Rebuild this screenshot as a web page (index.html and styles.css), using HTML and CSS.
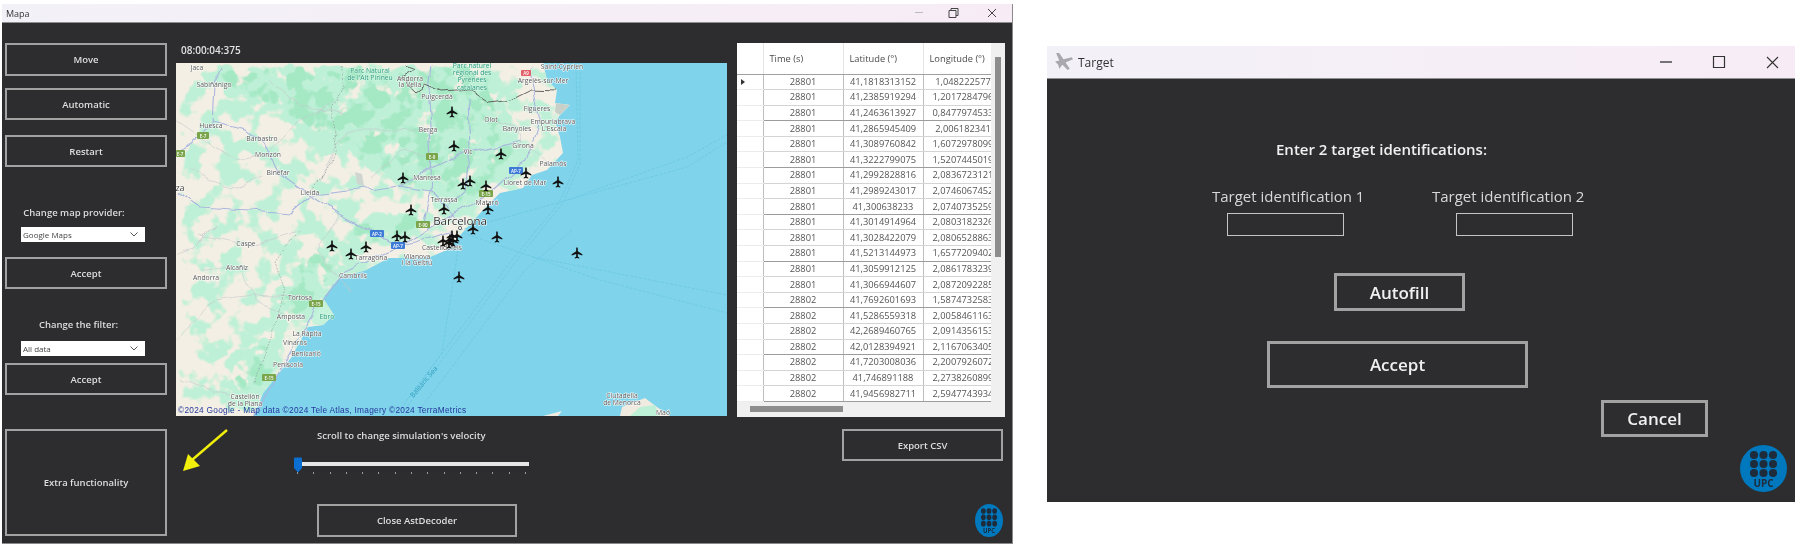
FILE: index.html
```html
<!DOCTYPE html>
<html lang="en">
<head>
	<meta charset="UTF-8">
	<title>AstDecoder</title>
	<link rel="stylesheet" href="styles.css">
</head>
<body>
<div class="desktop">

<!-- Map window -->
<div class="win win_map">
	<div class="titlebar">
		<span class="title">Mapa</span>
		<svg class="ctrls" width="90" height="14" viewBox="0 0 90 14">
			<path d="M7 6.5h8" stroke="#bbb" fill="none"/>
			<path d="M41 4.5h7v7h-7zM43 4.5v-2h7v7h-2" stroke="#444" fill="none"/>
			<path d="M80 3l8 8M88 3l-8 8" stroke="#444" fill="none"/>
		</svg>
	</div>
	<div class="map_body">
		<div class="side">
			<button class="btn b_move">Move</button>
			<button class="btn b_auto">Automatic</button>
			<button class="btn b_restart">Restart</button>
			<div class="lbl l_provider">Change map provider:</div>
			<div class="combo">Google Maps<svg width="8" height="5" viewBox="0 0 8 5"><path d="M.5.5L4 4 7.5.5" stroke="#555" fill="none"/></svg></div>
			<button class="btn b_accept1">Accept</button>
			<div class="lbl l_filter">Change the filter:</div>
			<div class="combo">All data<svg width="8" height="5" viewBox="0 0 8 5"><path d="M.5.5L4 4 7.5.5" stroke="#555" fill="none"/></svg></div>
			<button class="btn b_accept2">Accept</button>
			<button class="btn b_extra">Extra functionality</button>
		</div>

		<div class="center">
			<div class="clock">08:00:04:375</div>
			<svg class="map" width="551" height="353" viewBox="176 63 551 353">
				<defs>
					<path id="land" d="M176 63H543L547 80 557 90 555 103 570 105 560 115 555 122 560 137 563 153 547 170 532 175 523 188 500 193 483 210 463 232 447 250 430 257 400 258 389 258 366 270 339 278 323 298 334 315 323 325 308 327 298 345 291 358 276 377 263 393 254 416H176Z"/>
					<clipPath id="land_clip"><use href="#land"/></clipPath>
					<filter id="g_low" filterUnits="userSpaceOnUse" x="176" y="63" width="551" height="353" color-interpolation-filters="sRGB">
						<feTurbulence type="fractalNoise" baseFrequency=".05" numOctaves="3" seed="7" result="n"/>
						<feColorMatrix in="n" type="matrix" values="0 0 0 0 0 0 0 0 0 0 0 0 0 0 0 1 0 0 0 0" result="a"/>
						<feGaussianBlur in="SourceGraphic" stdDeviation="6" result="s"/>
						<feComposite in="a" in2="s" operator="in" result="m"/>
						<feComponentTransfer in="m" result="t"><feFuncA type="linear" slope="10" intercept="-3.74"/></feComponentTransfer>
						<feFlood flood-color="#bdf0d6"/>
						<feComposite in2="t" operator="in"/>
					</filter>
					<filter id="g_high" filterUnits="userSpaceOnUse" x="176" y="63" width="551" height="353" color-interpolation-filters="sRGB">
						<feTurbulence type="fractalNoise" baseFrequency=".06" numOctaves="3" seed="21" result="n"/>
						<feColorMatrix in="n" type="matrix" values="0 0 0 0 0 0 0 0 0 0 0 0 0 0 0 1 0 0 0 0" result="a"/>
						<feGaussianBlur in="SourceGraphic" stdDeviation="6" result="s"/>
						<feComposite in="a" in2="s" operator="in" result="m"/>
						<feComponentTransfer in="m" result="t"><feFuncA type="linear" slope="10" intercept="-3.5"/></feComponentTransfer>
						<feFlood flood-color="#bdf0d6"/>
						<feComposite in2="t" operator="in"/>
					</filter>
					<filter id="g_dark" filterUnits="userSpaceOnUse" x="176" y="63" width="551" height="353" color-interpolation-filters="sRGB">
						<feTurbulence type="fractalNoise" baseFrequency=".055" numOctaves="3" seed="42" result="n"/>
						<feColorMatrix in="n" type="matrix" values="0 0 0 0 0 0 0 0 0 0 0 0 0 0 0 1 0 0 0 0" result="a"/>
						<feGaussianBlur in="SourceGraphic" stdDeviation="6" result="s"/>
						<feComposite in="a" in2="s" operator="in" result="m"/>
						<feComponentTransfer in="m" result="t"><feFuncA type="linear" slope="10" intercept="-4.7"/></feComponentTransfer>
						<feFlood flood-color="#a4e8c4"/>
						<feComposite in2="t" operator="in"/>
					</filter>
					<filter id="wiggle" filterUnits="userSpaceOnUse" x="176" y="63" width="551" height="353">
						<feTurbulence type="fractalNoise" baseFrequency=".05" numOctaves="2" seed="3" result="n"/>
						<feDisplacementMap in="SourceGraphic" in2="n" scale="9" xChannelSelector="R" yChannelSelector="G"/>
					</filter>
					<g id="p" transform="scale(.82)"><path d="M0-7c.7 0 1 .9 1 1.8V-2L6.5 1.6V3L1 1.2V4.4L2.8 5.8V6.8L0 6-2.8 6.8V5.8L-1 4.4V1.2L-6.5 3V1.6L-1-2V-5.2C-1-6.1-.7-7 0-7Z"/></g>
				</defs>
				<rect x="176" y="63" width="551" height="353" fill="#7fd3ea"/>
				<!-- land -->
				<use href="#land" fill="#f4efe4"/>
				<path fill="#f0ebe0" d="M620 416L622 407 645 398 657 407 670 416ZM543 416L562 411 558 416Z"/>
				<g clip-path="url(#land_clip)">
					<rect x="176" y="63" width="551" height="353" fill="#000" fill-opacity=".8" filter="url(#g_low)"/>
					<path filter="url(#g_high)" d="M195 63H500L512 90 500 110 525 118 520 150 545 160 525 178 495 190 470 205 445 222 425 225 430 190 400 192 370 178 345 155 320 160 300 140 275 115 240 105 205 88ZM350 225L380 205 420 200 432 225 400 245 370 255 340 262 325 252ZM300 255L345 235 355 270 330 295 320 325 300 330 285 345 270 330 265 300ZM230 350L265 335 290 350 280 375 262 395 250 416H225L215 385Z"/>
					<path filter="url(#g_dark)" d="M200 63H490L500 110 520 150 500 185 450 215 430 190 400 190 370 175 340 150 300 135 270 105 230 95ZM340 225L420 205 430 225 370 255ZM290 260L345 240 330 295 300 325 270 320ZM235 350L275 335 280 370 255 400 225 395Z"/>
					<path fill="#c9cfc9" d="M556 103L570 105 560 115 555 112Z"/>
					<path fill="#cfd5cf" d="M355 172L362 174 364 186 357 184Z"/>
					<path fill="#c4f2da" d="M323 300L334 315 323 325 312 322Z"/>
				</g>
				<path fill="#bdf0d6" d="M640 407L655 405 660 416H630Z"/>
				<!-- roads -->
				<g filter="url(#wiggle)">
					<g fill="none" stroke="#a9b6de" stroke-width="1.1" stroke-linejoin="round">
						<path d="M176 192L200 208 250 211 290 214 312 195 360 190 400 185 430 190 445 205 460 222"/>
						<path d="M222 66L214 84 212 125 176 155"/>
						<path d="M212 122L245 130 262 140 278 172 310 195"/>
						<path d="M312 197L340 215 377 235 400 246 440 235 452 232"/>
						<path d="M254 416L290 352 318 305 345 272 397 248 440 222 487 196 516 170 530 150 540 120 530 72 535 66"/>
						<path d="M432 66L428 100 432 157 430 190 423 224"/>
						<path d="M468 100L470 150 465 190 446 205"/>
						<path d="M522 140L470 152M400 185L440 165 470 150"/>
					</g>
					<g fill="none" stroke="#c5c8cc" stroke-width=".6">
						<path d="M176 120L235 160 268 154 300 120 340 100M200 235L250 245 300 230M176 340L215 300 250 295 300 297M200 270L240 268 255 300 290 316M180 380L230 396M320 180L345 130 380 130 428 129M370 178L400 150 432 157M492 120L517 128 523 145 553 163M270 80L300 105 345 115M190 170L230 190 262 175M215 225L190 250 176 255M350 290L315 250 340 215"/>
					</g>
					<g fill="none" stroke="#8f9a96" stroke-width=".7" stroke-dasharray="1.5 1.5">
						<path d="M310 195L338 150 330 110 345 85 340 66M295 235L275 262 285 290 270 340 254 385"/>
					</g>
					<path fill="none" stroke="#555" stroke-width=".9" d="M404 66L414 70 400 78 415 92 425 85 442 92 470 90 490 103 510 100 530 90 555 91"/>
				</g>
				<!-- sea routes -->
				<g fill="none" stroke="#63c4e0" stroke-width=".6" stroke-dasharray="3 1.5">
					<path d="M580 63V163L563 203 517 260 407 407"/>
					<path d="M576 63L578 160 559 203 512 260 402 407"/>
					<path d="M572 230L525 270 418 412"/>
					<path d="M460 230L687 167 727 142"/>
					<path d="M567 200L687 157 727 135"/>
					<path d="M463 233L600 280 727 313"/>
					<path d="M533 257L727 295"/>
					<path d="M458 250L442 353 407 400"/>
				</g>
				<!-- road shields -->
				<g class="shield">
					<rect class="sg" x="197" y="132" width="12" height="7"/><text x="203" y="138">E-7</text>
					<rect class="sg" x="176" y="150" width="9" height="7"/><text x="180" y="156">E-7</text>
					<rect class="sg" x="426" y="153" width="12" height="7"/><text x="432" y="159">E-9</text>
					<rect class="sg" x="479" y="190" width="14" height="7"/><text x="486" y="196">E-15</text>
					<rect class="sg" x="416" y="221" width="14" height="7"/><text x="423" y="227">E-90</text>
					<rect class="sg" x="309" y="300" width="14" height="7"/><text x="316" y="306">E-15</text>
					<rect class="sg" x="262" y="374" width="14" height="7"/><text x="269" y="380">E-15</text>
					<rect class="sb" x="370" y="230" width="14" height="7"/><text x="377" y="236">AP-2</text>
					<rect class="sb" x="391" y="242" width="14" height="7"/><text x="398" y="248">AP-7</text>
					<rect class="sb" x="509" y="167" width="14" height="7"/><text x="516" y="173">AP-7</text>
					<rect class="sr" x="521" y="70" width="10" height="6"/><text x="526" y="75">A9</text>
				</g>
				<!-- place names -->
				<g class="place">
					<text x="197" y="70">Jaca</text><text x="214" y="87">Sabiñánigo</text><text x="211" y="128">Huesca</text>
					<text x="262" y="141">Barbastro</text><text x="268" y="157">Monzón</text><text x="278" y="175">Binéfar</text>
					<text x="310" y="195">Lleida</text><text class="big" x="180" y="191">za</text>
					<text x="410" y="81">Andorra</text><text x="410" y="87">la Vella</text><text x="437" y="99">Puigcerdà</text>
					<text x="428" y="132">Berga</text><text x="427" y="180">Manresa</text><text x="444" y="202">Terrassa</text>
					<text x="487" y="205">Mataró</text><text x="525" y="185">Lloret de Mar</text><text x="553" y="166">Palamós</text>
					<text x="523" y="148">Girona</text><text x="517" y="131">Banyoles</text><text x="554" y="131">L'Escala</text>
					<text x="553" y="124">Empuriabrava</text><text x="537" y="111">Figueres</text><text x="491" y="122">Olot</text>
					<text x="468" y="154">Vic</text><text x="562" y="69">Saint-Cyprien</text><text x="543" y="83">Argelès-sur-Mer</text>
					<text x="442" y="250">Castelldefels</text><text x="417" y="259">Vilanova</text><text x="417" y="265">i la Geltrú</text>
					<text x="371" y="260">Tarragona</text><text x="353" y="278">Cambrils</text><text x="246" y="246">Caspe</text>
					<text x="237" y="270">Alcañiz</text><text x="206" y="280">Andorra</text><text x="300" y="300">Tortosa</text>
					<text x="291" y="319">Amposta</text><text x="307" y="336">La Ràpita</text><text x="295" y="345">Vinaròs</text>
					<text x="306" y="356">Benicarló</text><text x="288" y="367">Peníscola</text><text x="245" y="399">Castellón</text>
					<text x="245" y="406">de la Plana</text><text x="622" y="398">Ciutadella</text><text x="622" y="405">de Menorca</text>
					<text x="663" y="415">Maó</text>
					<text class="big2" x="460" y="225">Barcelona</text>
					<text class="park" x="370" y="73">Parc Natural</text><text class="park" x="370" y="80">de l'Alt Pirineu</text>
					<text class="park" x="472" y="68">Parc naturel</text><text class="park" x="472" y="75">régional des</text>
					<text class="park" x="472" y="82">Pyrénées</text><text class="park" x="472" y="90">catalanes</text>
					<text class="park" x="327" y="319">Ebro</text>
					<text class="sea" x="424" y="384" transform="rotate(-50 424 382)">Balearic Sea</text>
				</g>
				<circle cx="460" cy="228" r="1.6" fill="#fff" stroke="#333" stroke-width=".7"/>
				<!-- aircraft -->
				<g fill="#111">
					<use href="#p" x="452" y="112"/><use href="#p" x="454" y="146"/><use href="#p" x="501" y="154"/>
					<use href="#p" x="526" y="173"/><use href="#p" x="558" y="182"/><use href="#p" x="403" y="178"/>
					<use href="#p" x="463" y="184"/><use href="#p" x="470" y="181"/><use href="#p" x="486" y="186"/>
					<use href="#p" x="444" y="209"/><use href="#p" x="411" y="210"/><use href="#p" x="488" y="209"/>
					<use href="#p" x="473" y="229"/><use href="#p" x="497" y="237"/><use href="#p" x="405" y="237"/>
					<use href="#p" x="397" y="236"/><use href="#p" x="443" y="241"/><use href="#p" x="450" y="240"/>
					<use href="#p" x="452" y="236"/><use href="#p" x="449" y="243"/><use href="#p" x="453" y="241"/>
					<use href="#p" x="457" y="236"/><use href="#p" x="577" y="253"/><use href="#p" x="459" y="277"/>
					<use href="#p" x="332" y="246"/><use href="#p" x="366" y="247"/><use href="#p" x="351" y="254"/>
				</g>
				<text class="credit" x="178" y="413">©2024 Google - Map data ©2024 Tele Atlas, Imagery ©2024 TerraMetrics</text>
			</svg>
			<div class="below">
				<svg class="arrow" width="50" height="48" viewBox="0 0 50 48">
					<path d="M49 3L14 33" stroke="#f2ef0a" stroke-width="2.4"/>
					<path d="M5 44L10 27 22 39Z" fill="#f2ef0a"/>
				</svg>
				<div class="speed">
					<div class="lbl speed_lbl">Scroll to change simulation's velocity</div>
					<div class="slider">
						<svg class="thumb" width="10" height="16" viewBox="0 0 10 16"><path d="M1 1.5Q1 .5 2 .5H8Q9 .5 9 1.5V11L5 15.5 1 11Z" fill="#0a6fd0"/></svg>
						<div class="track"></div>
						<div class="ticks"><i></i><i></i><i></i><i></i><i></i><i></i><i></i><i></i><i></i><i></i><i></i><i></i><i></i><i></i><i></i></div>
					</div>
					<button class="btn b_close">Close AstDecoder</button>
				</div>
			</div>
		</div>

		<div class="right">
			<div class="grid_box">
				<div class="grid_view">
					<table class="grid">
						<thead><tr><th class="rh"></th><th>Time (s)</th><th>Latitude (°)</th><th>Longitude (°)</th></tr></thead>
						<tbody>
							<tr><td class="rh"><span class="cur"></span></td><td>28801</td><td>41,1818313152</td><td>1,048222577</td></tr>
							<tr><td class="rh"></td><td>28801</td><td>41,2385919294</td><td>1,2017284796</td></tr>
							<tr><td class="rh"></td><td>28801</td><td>41,2463613927</td><td>0,8477974533</td></tr>
							<tr><td class="rh"></td><td>28801</td><td>41,2865945409</td><td>2,006182341</td></tr>
							<tr><td class="rh"></td><td>28801</td><td>41,3089760842</td><td>1,6072978099</td></tr>
							<tr><td class="rh"></td><td>28801</td><td>41,3222799075</td><td>1,5207445019</td></tr>
							<tr><td class="rh"></td><td>28801</td><td>41,2992828816</td><td>2,0836723121</td></tr>
							<tr><td class="rh"></td><td>28801</td><td>41,2989243017</td><td>2,0746067452</td></tr>
							<tr><td class="rh"></td><td>28801</td><td>41,300638233</td><td>2,0740735259</td></tr>
							<tr><td class="rh"></td><td>28801</td><td>41,3014914964</td><td>2,0803182326</td></tr>
							<tr><td class="rh"></td><td>28801</td><td>41,3028422079</td><td>2,0806528863</td></tr>
							<tr><td class="rh"></td><td>28801</td><td>41,5213144973</td><td>1,6577209402</td></tr>
							<tr><td class="rh"></td><td>28801</td><td>41,3059912125</td><td>2,0861783239</td></tr>
							<tr><td class="rh"></td><td>28801</td><td>41,3066944607</td><td>2,0872092285</td></tr>
							<tr><td class="rh"></td><td>28802</td><td>41,7692601693</td><td>1,5874732583</td></tr>
							<tr><td class="rh"></td><td>28802</td><td>41,5286559318</td><td>2,0058461163</td></tr>
							<tr><td class="rh"></td><td>28802</td><td>42,2689460765</td><td>2,0914356153</td></tr>
							<tr><td class="rh"></td><td>28802</td><td>42,0128394921</td><td>2,1167063405</td></tr>
							<tr><td class="rh"></td><td>28802</td><td>41,7203008036</td><td>2,2007926072</td></tr>
							<tr><td class="rh"></td><td>28802</td><td>41,746891188</td><td>2,2738260899</td></tr>
							<tr><td class="rh"></td><td>28802</td><td>41,9456982711</td><td>2,5947743934</td></tr>
						</tbody>
					</table>
				</div>
				<div class="vscroll"><span></span></div>
				<div class="hscroll"><span></span></div>
			</div>
			<button class="btn b_export">Export CSV</button>
			<svg class="upc upc_small" width="28" height="33" viewBox="0 0 47 47" preserveAspectRatio="none">
				<ellipse cx="23.5" cy="23.5" rx="23.5" ry="23.5" fill="#0078bd"/>
				<g fill="#1d2b3a"><circle cx="14" cy="10" r="4"/><circle cx="23.5" cy="10" r="4"/><circle cx="33" cy="10" r="4"/><circle cx="14" cy="19" r="4"/><circle cx="23.5" cy="19" r="4"/><circle cx="33" cy="19" r="4"/><circle cx="14" cy="28" r="4"/><circle cx="23.5" cy="28" r="4"/><circle cx="33" cy="28" r="4"/></g>
				<text x="23.5" y="42" class="upc_txt">UPC</text>
			</svg>
		</div>
	</div>
</div>

<!-- Target dialog -->
<div class="win win_target">
	<div class="titlebar">
		<svg class="app_icon" width="20" height="20" viewBox="0 0 19 19"><path d="M2 1L5 1 9 7 17 5 18 7 11 10 15 16 13 17 8 12 5 16 4 12 1 9 5 8Z" fill="#a9a9ad"/></svg>
		<span class="title">Target</span>
		<svg class="ctrls" width="130" height="16" viewBox="0 0 130 16">
			<path d="M5 8h12" stroke="#222" stroke-width="1.2" fill="none"/>
			<path d="M58.5 2.5h11v11h-11z" stroke="#333" stroke-width="1.2" fill="none"/>
			<path d="M112 3l11 11M123 3l-11 11" stroke="#333" stroke-width="1.1" fill="none"/>
		</svg>
	</div>
	<div class="target_body">
		<div class="heading">Enter 2 target identifications:</div>
		<div class="fields">
			<div class="field"><label>Target identification 1</label><div class="input input_a"></div></div>
			<div class="field"><label>Target identification 2</label><div class="input input_b"></div></div>
		</div>
		<button class="btn big b_autofill">Autofill</button>
		<button class="btn big b_accept">Accept</button>
		<button class="btn big b_cancel">Cancel</button>
		<svg class="upc upc_big" width="47" height="47" viewBox="0 0 47 47">
			<ellipse cx="23.5" cy="23.5" rx="23.5" ry="23.5" fill="#0078bd"/>
			<g fill="#1d2b3a"><circle cx="14" cy="10" r="4"/><circle cx="23.5" cy="10" r="4"/><circle cx="33" cy="10" r="4"/><circle cx="14" cy="19" r="4"/><circle cx="23.5" cy="19" r="4"/><circle cx="33" cy="19" r="4"/><circle cx="14" cy="28" r="4"/><circle cx="23.5" cy="28" r="4"/><circle cx="33" cy="28" r="4"/></g>
			<text x="23.5" y="42" class="upc_txt">UPC</text>
		</svg>
	</div>
</div>

</div>
</body>
</html>
```

FILE: styles.css
```css
html, body {
	margin: 0;
	height: 100%;
	background: #fff;
	overflow: hidden;
}
body {
	font-family: "Open Sans", "Noto Sans", sans-serif;
}
.desktop {
	display: flex;
	align-items: flex-start;
}

/* windows */
.win {
	background: #2d2d2f;
	filter: blur(.35px);
}
.win_map {
	width: 1010px;
	height: 539px;
	margin: 4px 0 0 2px;
	border-right: 1px solid #8a8a8a;
	border-bottom: 1px solid #8a8a8a;
}
.win_target {
	width: 748px;
	height: 456px;
	margin: 46px 0 0 34px;
}
.titlebar {
	display: flex;
	align-items: center;
	background: linear-gradient(90deg, #f3f1f8, #f7ecf6);
	border-bottom: 1px solid #8f8f8f;
	color: #333;
}
.win_map .titlebar {
	height: 18px;
	padding: 0 8px 0 4px;
	font-size: 9px;
}
.win_target .titlebar {
	height: 32px;
	padding: 0 10px 0 7px;
	font-size: 12px;
}
.app_icon {
	margin-right: 4px;
}
.ctrls {
	margin-left: auto;
}
.win_map .ctrls {
	margin-right: 6px;
}

/* buttons */
.btn {
	display: block;
	box-sizing: border-box;
	padding: 0;
	background: transparent;
	border: 2px solid #a2a2a2;
	color: #dedede;
	font-family: inherit;
	font-size: 9.5px;
	font-weight: 600;
}
.btn.big {
	border-width: 3px;
	color: #f0f0f0;
	font-size: 17px;
}

/* map window layout */
.map_body {
	display: flex;
	height: 520px;
	box-sizing: border-box;
	padding: 20px 0 0 3px;
}
.side {
	width: 162px;
	flex: none;
	display: flex;
	flex-direction: column;
}
.side .btn {
	width: 162px;
}
.b_move { height: 33px; }
.b_auto { height: 32px; margin-top: 12px; }
.b_restart { height: 32px; margin-top: 15px; }
.b_accept1 { height: 32px; margin-top: 15px; }
.b_accept2 { height: 32px; margin-top: 7px; }
.b_extra { height: 107px; margin-top: 34px; }
.lbl {
	color: #dcdcdc;
	font-size: 9.5px;
	line-height: 14px;
	font-weight: 600;
}
.l_provider {
	margin-top: 39px;
	text-align: center;
	padding-right: 24px;
	height: 14px;
	margin-bottom: 7px;
}
.l_filter {
	margin-top: 29px;
	text-align: center;
	padding-right: 15px;
	height: 14px;
	margin-bottom: 9px;
}
.combo {
	display: flex;
	align-items: center;
	justify-content: space-between;
	box-sizing: border-box;
	width: 124px;
	height: 15px;
	margin-left: 16px;
	padding: 0 7px 0 2px;
	background: #fff;
	color: #444;
	font-size: 8px;
}
.center {
	width: 551px;
	flex: none;
	margin-left: 9px;
}
.clock {
	height: 20px;
	padding: 0 0 0 5px;
	color: #e2e2e2;
	font-size: 10px;
	font-weight: 600;
	line-height: 15px;
}
.map {
	display: block;
}
.map text {
	text-anchor: middle;
}
.place text {
	font-size: 6.8px;
	fill: #555;
	stroke: #fff;
	stroke-width: 1px;
	paint-order: stroke;
	stroke-linejoin: round;
}
.place .big {
	font-size: 9px;
	fill: #444;
}
.place .big2 {
	font-size: 11.5px;
	fill: #333;
}
.place .park {
	fill: #2f9b80;
	stroke: #d8f7e6;
	stroke-width: .8px;
}
.place .sea {
	fill: #2f9fbf;
	stroke: none;
}
.shield rect { rx: 1px; }
.shield .sg { fill: #7aa54a; }
.shield .sb { fill: #3d7bd6; }
.shield .sr { fill: #e2606a; }
.shield text {
	font-size: 4.5px;
	fill: #fff;
	font-weight: 600;
}
.map .credit {
	text-anchor: start;
	font-size: 8.3px;
	letter-spacing: .28px;
	fill: #23389c;
	font-family: "Liberation Sans", sans-serif;
}
.below {
	display: flex;
}
.arrow {
	flex: none;
	margin: 11px 0 0 2px;
}
.speed {
	margin-left: 89px;
	width: 200px;
	padding-top: 13px;
}
.speed_lbl {
	white-space: nowrap;
}
.slider {
	position: relative;
	width: 236px;
	margin: 13px 0 0 -24px;
	padding-top: 6px;
}
.thumb {
	position: absolute;
	left: 0;
	top: 1px;
}
.track {
	height: 4px;
	margin-left: 3px;
	background: #e6e6e6;
}
.ticks {
	display: flex;
	justify-content: space-between;
	margin: 6px 3px 0 4px;
}
.ticks i {
	width: 1px;
	height: 2px;
	background: #9a9a9a;
}
.b_close {
	width: 200px;
	height: 33px;
	margin-top: 30px;
}

/* grid */
.right {
	width: 268px;
	flex: none;
	margin-left: 10px;
}
.grid_box {
	display: grid;
	grid-template-columns: 254px 14px;
	grid-template-rows: 359px 15px;
	width: 268px;
	background: #f0f0f0;
}
.grid_view {
	overflow: hidden;
	background: #fff;
}
.grid {
	border-collapse: collapse;
	table-layout: fixed;
	width: 266px;
	color: #555;
	font-size: 9.3px;
}
.grid th {
	width: 80px;
	height: 31px;
	padding: 0 0 0 6px;
	box-sizing: border-box;
	text-align: left;
	font-weight: 400;
	color: #4a4a4a;
	border-right: 1px solid #e4e4e4;
	border-bottom: 1px solid #a0a0a0;
}
.grid th.rh {
	width: 26px;
	padding: 0;
}
.grid td {
	height: 15.6px;
	padding: 0;
	box-sizing: border-box;
	text-align: center;
	white-space: nowrap;
	overflow: hidden;
	border-right: 1px solid #bdbdbd;
	border-bottom: 1px solid #d4d4d4;
	line-height: 14px;
}
.grid tr:nth-child(3n) td {
	border-bottom-color: #9c9c9c;
}
.grid td.rh, .grid tr:nth-child(3n) td.rh {
	border-bottom-color: #ececec;
}
.cur {
	display: inline-block;
	border-left: 4px solid #333;
	border-top: 3px solid transparent;
	border-bottom: 3px solid transparent;
	margin-right: 14px;
}
.vscroll {
	grid-row: 1 / span 2;
	grid-column: 2;
	padding: 14px 0 0 4px;
}
.vscroll span {
	display: block;
	width: 6px;
	height: 200px;
	background: #8d8d8d;
}
.hscroll {
	padding: 4px 0 0 13px;
}
.hscroll span {
	display: block;
	width: 93px;
	height: 6px;
	background: #8d8d8d;
}
.b_export {
	width: 161px;
	height: 32px;
	margin: 12px 0 0 105px;
}
.upc_small {
	display: block;
	margin: 43px 0 0 238px;
}
.upc_txt {
	font-size: 10px;
	font-weight: 700;
	fill: #1d2b3a;
	text-anchor: middle;
}

/* target dialog */
.target_body {
	height: 423px;
	box-sizing: border-box;
	padding-top: 59px;
}
.heading {
	margin-left: 229px;
	color: #f0f0f0;
	font-size: 15px;
	font-weight: 600;
	line-height: 22px;
}
.fields {
	display: grid;
	grid-template-columns: 220px 170px;
	margin: 26px 0 0 165px;
}
.field {
	color: #d8d8d8;
	font-size: 15px;
	line-height: 20px;
	white-space: nowrap;
}
.field label {
	display: block;
	height: 20px;
}
.input {
	box-sizing: border-box;
	width: 117px;
	height: 23px;
	margin-top: 7px;
	border: 1px solid #c4c4c4;
}
.input_a { margin-left: 15px; }
.input_b { margin-left: 24px; }
.b_autofill {
	width: 131px;
	height: 38px;
	margin: 37px 0 0 287px;
}
.b_accept {
	width: 261px;
	height: 47px;
	margin: 30px 0 0 220px;
}
.b_cancel {
	width: 107px;
	height: 37px;
	margin: 12px 0 0 554px;
}
.upc_big {
	display: block;
	margin: 8px 0 0 693px;
}
```
